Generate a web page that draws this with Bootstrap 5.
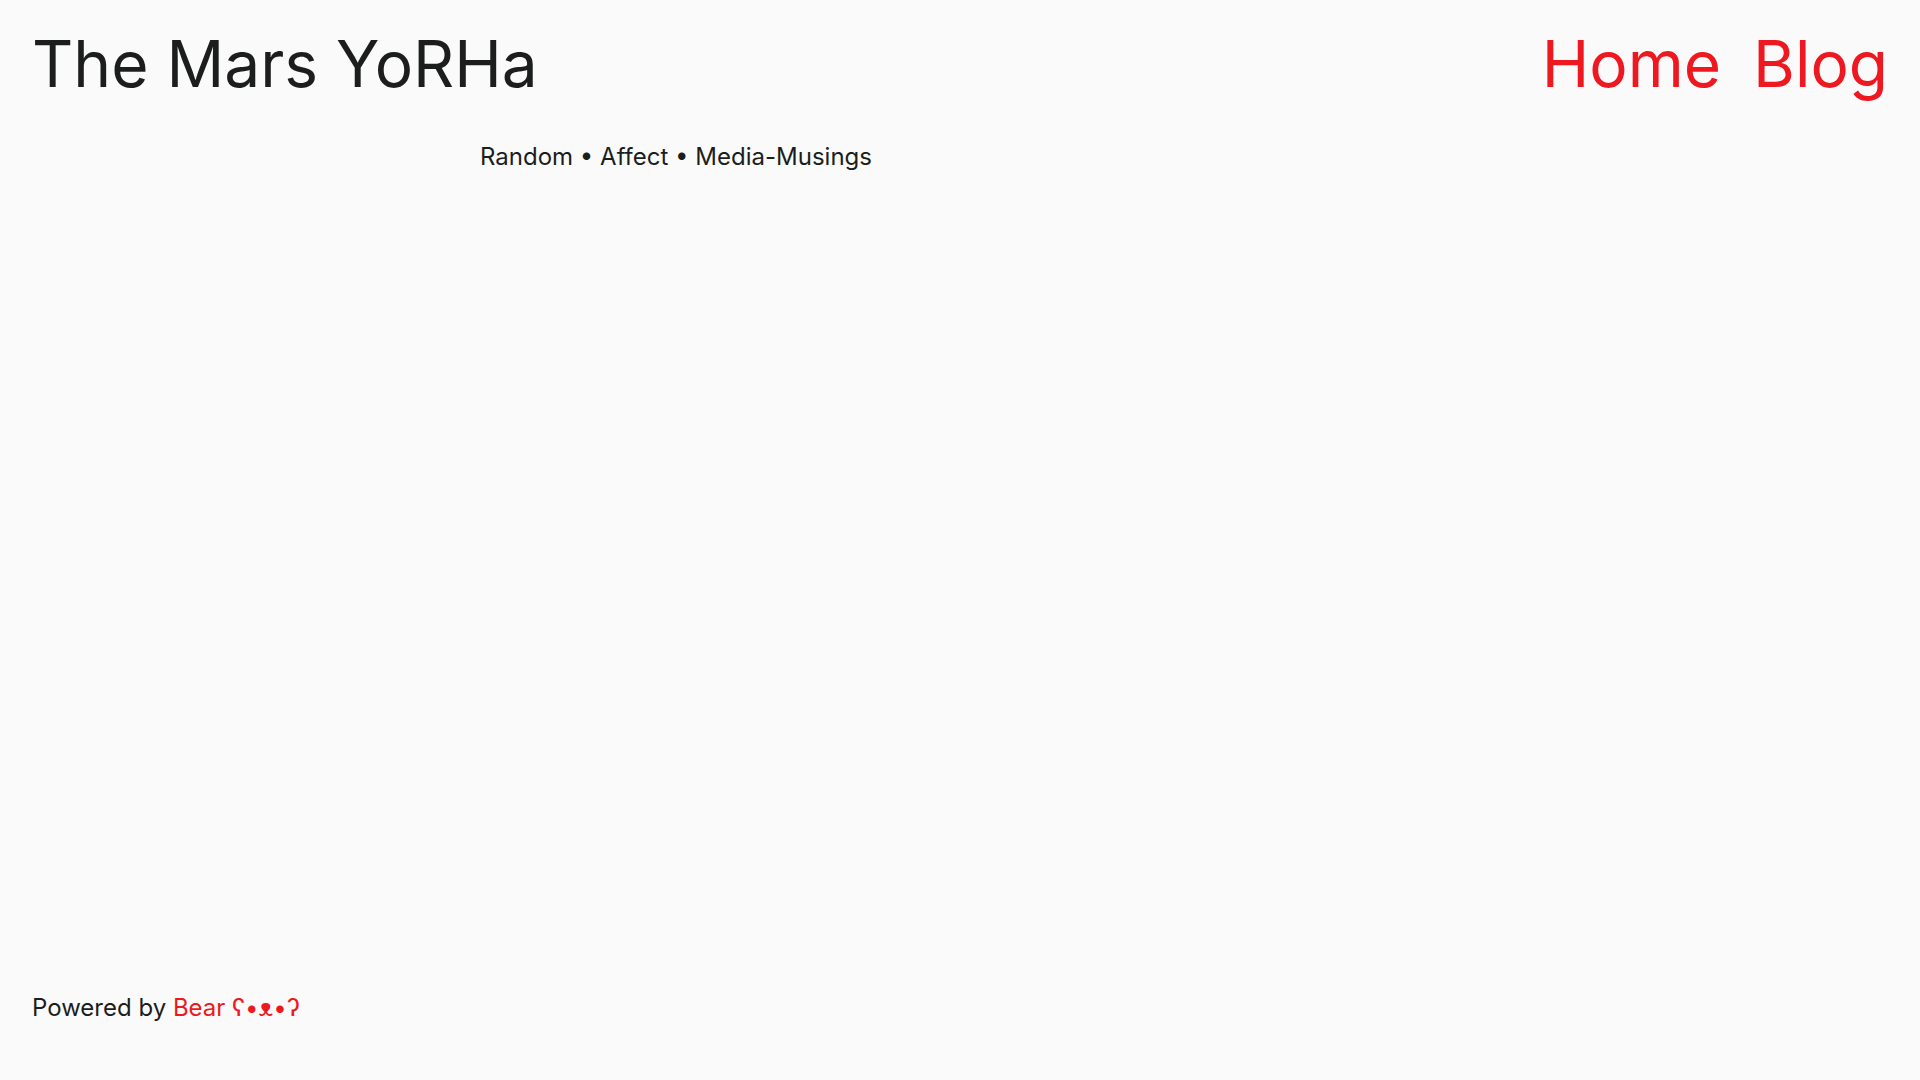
<!DOCTYPE html>
<html lang="en">
<head>
<meta charset="utf-8">
<meta name="viewport" content="width=device-width, initial-scale=1">
<title>The Mars YoRHa</title>
<link href="https://cdn.jsdelivr.net/npm/bootstrap@5.3.0/dist/css/bootstrap.min.css" rel="stylesheet">
<style>
body { font-family: Inter, "DejaVu Sans", sans-serif; font-size: 24px; line-height: 36px; color: #1c1e1d; background: #fafafa; }
a { color: #ed1820; text-decoration: none; }
.site-head { padding: 32px 32px 0; font-size: 64px; line-height: 64px; }
.site-title { font-size: 64px; line-height: 64px; font-weight: 400; }
.site-nav { gap: 32px; }
.site-main { width: 50%; padding-top: 43px; }
.site-foot { padding: 0 32px 54px; }
</style>
</head>
<body class="d-flex flex-column min-vh-100">
<header class="site-head d-flex flex-wrap justify-content-between">
<h1 class="site-title m-0">The Mars YoRHa</h1>
<nav class="site-nav d-flex"><a href="#">Home</a><a href="#">Blog</a></nav>
</header>
<main class="site-main mx-auto flex-grow-1"><p class="m-0">Random • Affect • Media-Musings</p></main>
<footer class="site-foot">Powered by <a href="#">Bear ʕ•ᴥ•ʔ</a></footer>
<script src="https://cdn.jsdelivr.net/npm/bootstrap@5.3.0/dist/js/bootstrap.bundle.min.js"></script>
</body>
</html>
